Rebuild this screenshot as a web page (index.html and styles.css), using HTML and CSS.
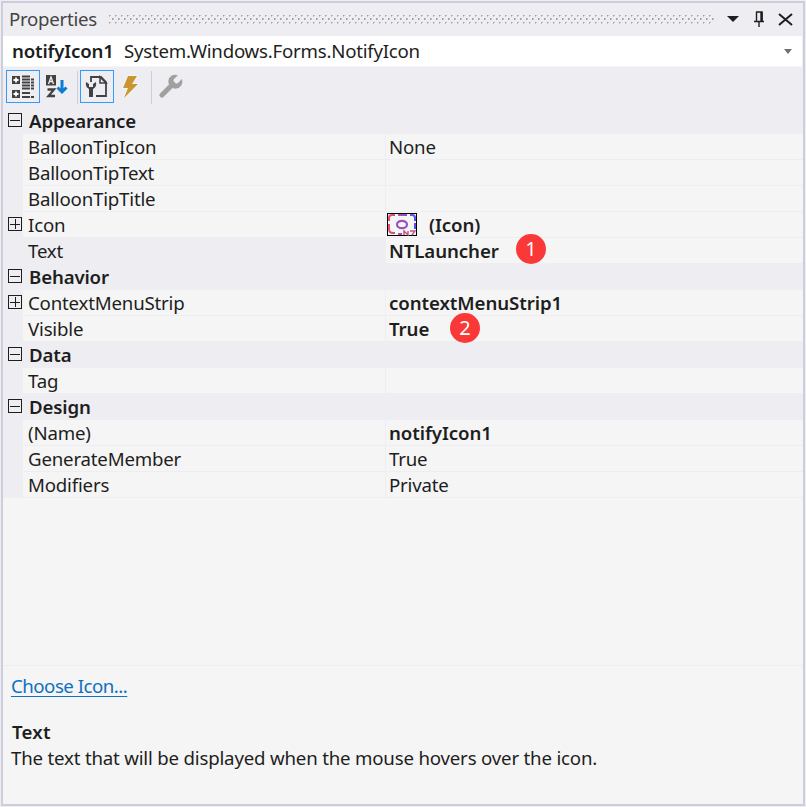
FILE: index.html
```html
<!DOCTYPE html>
<html lang="en">
<head>
<meta charset="utf-8">
<title>Properties</title>
<link rel="stylesheet" href="styles.css">
</head>
<body>
<main class="panel">
  <header class="titlebar">
    <span class="title">Properties</span>
    <svg class="grip" width="606" height="9"><defs><pattern id="dots" width="6" height="7" patternUnits="userSpaceOnUse"><path d="M1 0h1v1h-1zM4 3h1v2h-1zM1 7h1v1h-1z" fill="#a0a0a4"/><path d="M2 0h1v1h-1zM5 3h1v2h-1zM1 1h1v1h-1z" fill="#c4c4c8"/></pattern></defs><rect width="606" height="9" fill="url(#dots)"/></svg>
    <svg class="window-icons" width="68" height="18" viewBox="0 0 68 18"><path d="M0 6h12L6 12z" fill="#1e1e1e"/><path d="M29 2h6v9M29.5 2v9M27 11.5h10M32 12v5" fill="none" stroke="#1e1e1e" stroke-width="1.4"/><path d="M34.5 2v9" stroke="#1e1e1e" stroke-width="2.4"/><path d="M52 4l13 11M65 4l-13 11" stroke="#1e1e1e" stroke-width="2"/></svg>
  </header>
  <div class="object"><b class="object-name">notifyIcon1</b><span class="object-type">System.Windows.Forms.NotifyIcon</span>
    <svg class="object-arrow" width="8" height="5"><path d="M0 0h8L4 5z" fill="#717171"/></svg>
  </div>
  <nav class="toolbar">
    <span class="tool active"><svg width="24" height="24" viewBox="0 0 24 24"><path d="M1 1h8v8H1zM1 15h8v8H1z" fill="#424242"/><path d="M5 2.5v5M2.5 5h5M5 16.5v5M2.5 19h5" stroke="#fff" stroke-width="1.8"/><path d="M11 1.5h8M11 4.5h8M11 7.5h8M11 10.5h8M11 13.5h8M11 18h8M11 22h8M20 4.5h3M20 7.5h3M20 10.5h3M20 13.5h3M20 22h3" stroke="#424242" stroke-width="1.8"/></svg></span>
    <span class="tool sort"><svg width="24" height="24" viewBox="0 0 24 24"><path d="M1 0h10v10.500H1z" fill="#424242"/><path d="M3.500 9L6 2l2.500 7M4 6.500h4" fill="none" stroke="#eee" stroke-width="1.3"/><path d="M2.500 14.500H9L3.500 21H10" fill="none" stroke="#424242" stroke-width="2.300"/><path d="M17 5v12M12.500 12.500l4.500 4.500 4.500-4.500" fill="none" stroke="#0b7bd3" stroke-width="3"/></svg></span>
    <i class="separator first"></i>
    <span class="tool active"><svg width="24" height="24" viewBox="0 0 24 24"><path d="M6 7V2h10l5 5v14H11" fill="none" stroke="#424242" stroke-width="1.8"/><path d="M15 2v6h6z" fill="#eeeef2" stroke="#424242" stroke-width="1.6"/><path d="M1 7Q0 12 4 14v8h4v-8q4-2 3-7L8 9v3H4V9z" fill="#424242"/></svg></span>
    <span class="tool bolt"><svg width="20" height="26" viewBox="0 0 20 26"><path d="M7 2h9l-5 8h6L3 24l4-10H2z" fill="#c99632" stroke="#f8f8fa" stroke-width="1.5" paint-order="stroke"/></svg></span>
    <i class="separator second"></i>
    <svg class="wrench" width="24" height="25" viewBox="0 0 24 25"><path d="M3 22L14 11" stroke="#a0a0a0" stroke-width="5" stroke-linecap="round"/><path d="M19 2.200A7 7 0 1 0 22.800 6L18.500 10.500 14.700 10.200 14.500 6.600z" fill="#a0a0a0"/></svg>
  </nav>
  <section class="grid">
    <div class="category"><i class="toggle"></i><b>Appearance</b></div>
    <div class="row"><span class="key">BalloonTipIcon</span><span class="value">None</span></div>
    <div class="row"><span class="key">BalloonTipText</span><span class="value"></span></div>
    <div class="row"><span class="key">BalloonTipTitle</span><span class="value"></span></div>
    <div class="row"><i class="toggle plus"></i><span class="key">Icon</span><span class="value bold icon-value"><svg class="thumb" width="30" height="23" viewBox="0 0 30 23"><defs><linearGradient id="tint" gradientUnits="userSpaceOnUse" x1="0" y1="0" x2="30" y2="0"><stop stop-color="#ed5068"/><stop offset=".5" stop-color="#a550ad"/><stop offset="1" stop-color="#4b50f5"/></linearGradient></defs><rect x=".5" y=".5" width="29" height="22" fill="#f5f5f5" stroke="#000"/><path d="M2 8V5q0-3 3-3h3M11 2h9M23 2h2q3 0 3 3v3M28 10v6M2 11v5q0 4 4 4h2M11 21h4" fill="none" stroke="url(#tint)" stroke-width="2"/><ellipse cx="15" cy="11.500" rx="5" ry="3.700" fill="none" stroke="#9851bd" stroke-width="2.200"/><path d="M17 22v-4l4 4v-4M23 18h5l-3 4" fill="none" stroke="#c45090" stroke-width="1.4"/></svg><span>(Icon)</span></span></div>
    <div class="row selected"><span class="key">Text</span><span class="value bold">NTLauncher<em class="badge one">1</em></span></div>
    <div class="category"><i class="toggle"></i><b>Behavior</b></div>
    <div class="row"><i class="toggle plus"></i><span class="key">ContextMenuStrip</span><span class="value bold">contextMenuStrip1</span></div>
    <div class="row"><span class="key">Visible</span><span class="value bold">True<em class="badge two">2</em></span></div>
    <div class="category"><i class="toggle"></i><b>Data</b></div>
    <div class="row"><span class="key">Tag</span><span class="value"></span></div>
    <div class="category"><i class="toggle"></i><b>Design</b></div>
    <div class="row"><span class="key">(Name)</span><span class="value bold">notifyIcon1</span></div>
    <div class="row"><span class="key">GenerateMember</span><span class="value">True</span></div>
    <div class="row"><span class="key">Modifiers</span><span class="value">Private</span></div>
  </section>
  <section class="help">
    <a class="command">Choose Icon...</a>
    <b class="help-title">Text</b>
    <p class="help-text">The text that will be displayed when the mouse hovers over the icon.</p>
  </section>
</main>
</body>
</html>
```
FILE: styles.css
```css
* { box-sizing: border-box; }
body { margin: 0; padding: 1px; width: 806px; height: 807px; overflow: hidden; background: #eeeef2; color: #1e1e1e; font: 18.67px/26px "Noto Sans", sans-serif; letter-spacing: -.19px; white-space: nowrap; }
svg { display: block; flex: none; }
b, .bold { font-weight: 600; letter-spacing: -.08px; }
.panel { width: 804px; height: 805px; border: 2px solid #cccedb; display: flex; flex-direction: column; }
.titlebar { height: 33px; display: flex; align-items: center; padding: 0 0 2px 6px; color: #444; }
.title { width: 99px; letter-spacing: -.28px; }
.grip { margin-top: 1px; }
.window-icons { margin-left: 13px; }
.object { height: 31px; margin-right: 1px; background: #fff; display: flex; align-items: center; padding: 0 10px 0 9px; border-bottom: 1px solid #f5f5f7; }
.object-name { width: 112px; letter-spacing: -.18px; }
.object-type { letter-spacing: -.23px; }
.object-arrow { margin-left: auto; }
.toolbar { height: 41px; display: flex; align-items: flex-start; padding: 3px 0 0 3px; }
.tool { width: 34px; height: 33px; display: flex; align-items: center; justify-content: center; }
.tool.active { border: 1px solid #3399ff; }
.separator { width: 1px; height: 33px; background: #cccedb; margin-top: 1px; }
.first { margin: 1px 2px 0 3px; }
.second { margin-left: 3px; }
.wrench { margin: 3px 0 0 7px; }
.grid { height: 557px; background: #f5f5f5; }
.category, .row { height: 26px; display: flex; background: #eeeef2; position: relative; }
.category { padding-left: 26px; }
.category b { letter-spacing: -.15px; }
.row { padding-left: 20px; }
.key, .value { height: 25px; background: #f5f5f5; }
.key { width: 362px; padding-left: 5px; }
.value { flex: 1; margin-left: 1px; padding-left: 3px; }
.selected .key { background: #eeeef2; }
.toggle { position: absolute; left: 5px; top: 5px; width: 14px; height: 14px; border: 1px solid #1e1e1e; background: linear-gradient(#1e1e1e, #1e1e1e) center/10px 1px no-repeat; }
.plus { background: linear-gradient(#1e1e1e, #1e1e1e) center/10px 1px no-repeat, linear-gradient(#1e1e1e, #1e1e1e) center/1px 10px no-repeat; }
.icon-value { display: flex; gap: 12px; padding-left: 1px; }
.thumb { margin-top: 1px; }
.badge { position: absolute; width: 30px; height: 30px; border-radius: 50%; background: #fa3838; color: #fff; text-align: center; font: 20px/30px "Noto Sans", sans-serif; z-index: 1; }
.one { left: 513px; top: -4px; }
.two { left: 447px; top: -3px; }
.help { flex: 1; background: #f5f5f5; border-top: 1px solid #eeeef0; padding: 7px 8px; display: flex; flex-direction: column; align-items: flex-start; }
.command { color: #0e70c0; letter-spacing: -.5px; text-decoration: underline; text-decoration-thickness: 1px; text-underline-offset: 3px; }
.help-title { margin: 20px 0 0 1px; letter-spacing: .2px; }
.help-text { margin: 0; }
```
